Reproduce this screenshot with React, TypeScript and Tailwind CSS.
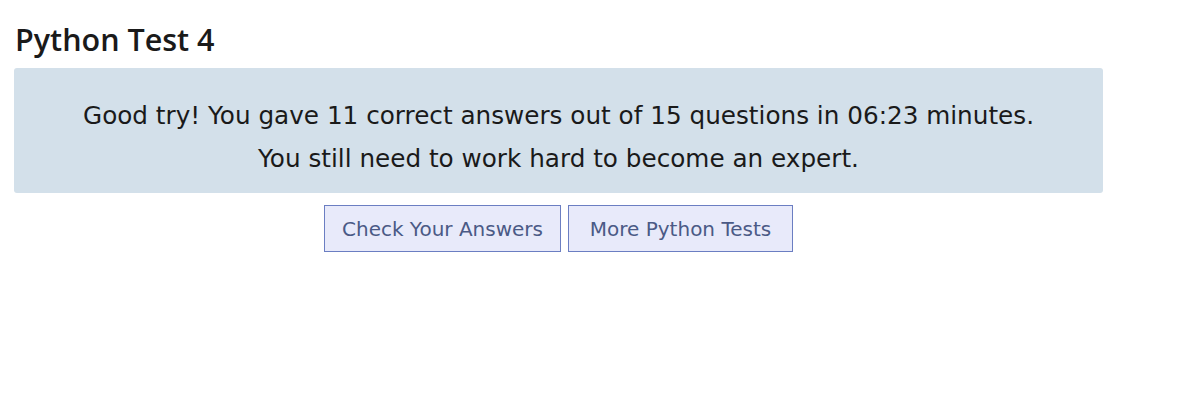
export default function App() {
  return (
    <div className="w-[1089px] ml-[14px] pt-[19px] bg-white">
      <h1 className="text-[30.5px] leading-[40px] font-semibold text-[#1a1a1a] pl-[1px] mb-[9px] font-['Open_Sans',sans-serif]">
        Python Test 4
      </h1>
      <div className="bg-[#d3e0ea] rounded-[3px] h-[125px] pt-[26px] text-center text-[24.7px] text-[#1a1a1a] font-['DejaVu_Sans',sans-serif]">
        <p className="leading-[43px]">
          Good try! You gave 11 correct answers out of 15 questions in 06:23 minutes.
        </p>
        <p className="leading-[43px]">You still need to work hard to become an expert.</p>
      </div>
      <div className="flex justify-center gap-[7px] mt-[12px] font-['DejaVu_Sans',sans-serif]">
        <button className="h-[47px] w-[237px] border border-[#6b7ec2] bg-[#e8eafa] text-[#4b5a86] text-[20px]">
          Check Your Answers
        </button>
        <button className="h-[47px] w-[225px] border border-[#6b7ec2] bg-[#e8eafa] text-[#4b5a86] text-[20px]">
          More Python Tests
        </button>
      </div>
    </div>
  );
}
